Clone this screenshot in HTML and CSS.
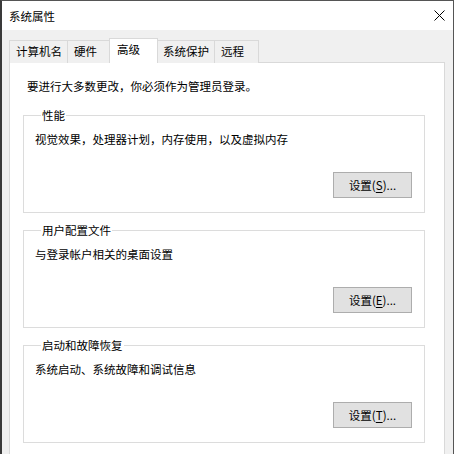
FILE: index.html
```html
<!DOCTYPE html>
<html lang="zh-CN">

<head>
    <meta charset="UTF-8">
    <meta name="viewport" content="width=device-width, initial-scale=1.0">
    <link rel="stylesheet" href="styles.css">
    <title>系统属性</title>
</head>

<body>
    <div class="window">
        <div class="title-bar">
            <span class="title">系统属性</span>
            <button class="close-button" aria-label="关闭">
                <svg width="11" height="11" viewBox="0 0 11 11">
                    <path d="M0.5 0.5 L10.5 10.5 M10.5 0.5 L0.5 10.5" stroke="#000" stroke-width="1" fill="none" />
                </svg>
            </button>
        </div>

        <div class="dialog">
            <div class="tabs">
                <div class="tab">计算机名</div>
                <div class="tab">硬件</div>
                <div class="tab active">高级</div>
                <div class="tab">系统保护</div>
                <div class="tab">远程</div>
            </div>

            <div class="panel">
                <p class="intro">要进行大多数更改，你必须作为管理员登录。</p>

                <fieldset class="group">
                    <legend>性能</legend>
                    <p class="desc">视觉效果，处理器计划，内存使用，以及虚拟内存</p>
                    <div class="actions">
                        <button class="settings-button">设置(<u>S</u>)...</button>
                    </div>
                </fieldset>

                <fieldset class="group">
                    <legend>用户配置文件</legend>
                    <p class="desc">与登录帐户相关的桌面设置</p>
                    <div class="actions">
                        <button class="settings-button">设置(<u>E</u>)...</button>
                    </div>
                </fieldset>

                <fieldset class="group">
                    <legend>启动和故障恢复</legend>
                    <p class="desc">系统启动、系统故障和调试信息</p>
                    <div class="actions">
                        <button class="settings-button">设置(<u>T</u>)...</button>
                    </div>
                </fieldset>
            </div>
        </div>
    </div>
</body>

</html>
```

FILE: styles.css
```css
body {
    margin: 0;
    overflow: hidden;
    font-family: "Noto Sans CJK SC", "Noto Sans", sans-serif;
    font-size: 11.5px;
    color: #000;
    background: #fff;
}

.window {
    width: 454px;
    height: 454px;
    overflow: hidden;
    box-sizing: border-box;
    border: 1px solid #555;
    border-left: 2px solid #3a3a3a;
    border-bottom: none;
    background: #f0f0f0;
}

.title-bar {
    height: 29px;
    background: #fff;
    display: flex;
    align-items: center;
    justify-content: space-between;
    padding-left: 7px;
}

.title {
    line-height: 16px;
}

.close-button {
    width: 46px;
    height: 29px;
    border: none;
    background: transparent;
    padding: 0;
    display: flex;
    align-items: center;
    justify-content: flex-end;
    padding-right: 8px;
    box-sizing: border-box;
}

.dialog {
    padding: 8px 8px 0 7px;
}

/* tab strip */
.tabs {
    display: flex;
    align-items: flex-end;
    margin-bottom: -1px;
    padding-left: 1px;
}

.tab {
    height: 23px;
    min-width: 45px;
    box-sizing: border-box;
    padding: 0 5px 0 6px;
    margin-left: -1px;
    border: 1px solid #d9d9d9;
    border-bottom: none;
    background: #f0f0f0;
    line-height: 21px;
}

.tab.active {
    height: 25px;
    margin: 0 -2px 0 -3px;
    padding: 0 7px 0 7px;
    min-width: 49px;
    background: #fff;
    line-height: 20px;
    position: relative;
    z-index: 1;
}

.tab.active + .tab {
    margin-left: 0;
}

.panel {
    background: #fff;
    border: 1px solid #d9d9d9;
    height: 420px;
    padding: 15px 19px 0 13px;
}

.intro {
    margin: 0 0 14px 4px;
    line-height: 16px;
}

/* group boxes */
.group {
    margin: 0 0 10px 0;
    border: 1px solid #dcdcdc;
    padding: 9px 12px 14px 11px;
}

.group legend {
    margin-left: 6px;
    padding: 0 1px;
    line-height: 14px;
}

.desc {
    margin: 0;
    line-height: 16px;
}

.actions {
    display: flex;
    justify-content: flex-end;
    margin-top: 25px;
}

.settings-button {
    width: 79px;
    height: 26px;
    background: #e1e1e1;
    border: 1px solid #adadad;
    font-family: inherit;
    font-size: 11.5px;
    color: #000;
    padding: 0;
}

.settings-button u {
    text-underline-offset: 2px;
}
```
